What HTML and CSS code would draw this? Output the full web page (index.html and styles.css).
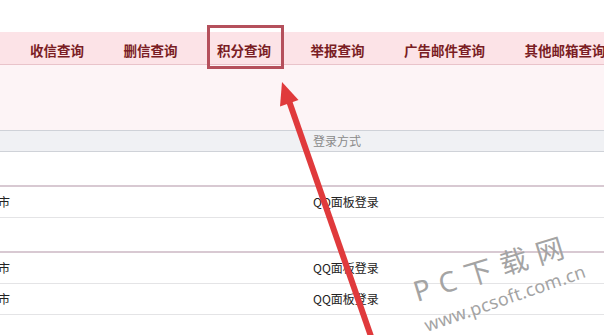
FILE: index.html
```html
<!DOCTYPE html>
<html lang="zh">
<head>
<meta charset="utf-8">
<link rel="stylesheet" href="styles.css">
</head>
<body>
<div class="page">
  <div class="topgap"></div>
  <nav class="nav">
    <span class="nav-item">收信查询</span>
    <span class="nav-item">删信查询</span>
    <span class="nav-item nav-item-marked">积分查询</span>
    <span class="nav-item">举报查询</span>
    <span class="nav-item">广告邮件查询</span>
    <span class="nav-item">其他邮箱查询</span>
  </nav>
  <div class="pinkarea"></div>
  <div class="thead">
    <div class="cell"></div>
    <div class="cell th">登录方式</div>
  </div>
  <div class="spacer"></div>
  <div class="group">
    <div class="row"><div class="cell c1">市</div><div class="cell">QQ面板登录</div></div>
  </div>
  <div class="spacer"></div>
  <div class="group">
    <div class="row"><div class="cell c1">市</div><div class="cell">QQ面板登录</div></div>
    <div class="row"><div class="cell c1">市</div><div class="cell">QQ面板登录</div></div>
  </div>

  <svg class="overlay" width="604" height="335" viewBox="0 0 604 335">
    <g class="wm">
      <text class="wm-big" x="0" y="0" transform="translate(417 302) rotate(-17)">P C 下 载 网</text>
      <text class="wm-small" x="0" y="0" transform="translate(427 332) rotate(-19)">www.pcsoft.com.cn</text>
    </g>
    <line x1="374" y1="345" x2="288" y2="98" stroke="#e03a3c" stroke-width="6"/>
    <polygon points="282,82 298.5,100 280,106.5" fill="#e03a3c"/>
  </svg>
</div>
</body>
</html>
```

FILE: styles.css
```css
html, body {
  margin: 0;
  padding: 0;
  background: #ffffff;
}
.page {
  position: relative;
  width: 604px;
  height: 335px;
  overflow: hidden;
  font-family: "Noto Sans CJK SC", "Noto Sans", sans-serif;
}
.topgap {
  height: 32px;
  background: #ffffff;
}
.nav {
  display: flex;
  align-items: center;
  height: 32px;
  padding-left: 30px;
  gap: 39.5px;
  background: #fce3e7;
  border-bottom: 1px solid #e9c3ca;
  white-space: nowrap;
}
.nav-item {
  font-size: 13.5px;
  font-weight: bold;
  color: #7a1d24;
  line-height: 32px;
  padding-top: 3px;
  position: relative;
}
.nav-item-marked::after {
  content: "";
  position: absolute;
  left: -10px;
  right: -13px;
  top: -6px;
  bottom: -3px;
  border: 3px solid #b5505c;
}
.pinkarea {
  height: 65px;
  background: #fdf4f6;
}
.thead {
  display: grid;
  grid-template-columns: 313px 1fr;
  height: 20px;
  background: #f0f1f4;
  border-top: 1px solid #cfd2d8;
  border-bottom: 1px solid #cfd2d8;
}
.cell {
  font-size: 12px;
  line-height: 30px;
  color: #222;
}
.thead .cell {
  line-height: 20px;
}
.th {
  color: #8a8a8a;
}
.spacer {
  height: 33px;
  background: #fff;
}
.group {
  border-top: 2px solid #d8c9d2;
}
.row {
  display: grid;
  grid-template-columns: 313px 1fr;
  height: 30px;
  border-bottom: 1px solid #e4e4e6;
}
.c1 {
  margin-left: -2px;
}
.overlay {
  position: absolute;
  left: 0;
  top: 0;
}
.wm text {
  fill: #a4a4a4;
  font-family: "Noto Sans", "Noto Sans CJK SC", sans-serif;
}
.wm-big {
  font-size: 28px;
  letter-spacing: 1px;
}
.wm-small {
  font-size: 18px;
  letter-spacing: 0.3px;
}
```
